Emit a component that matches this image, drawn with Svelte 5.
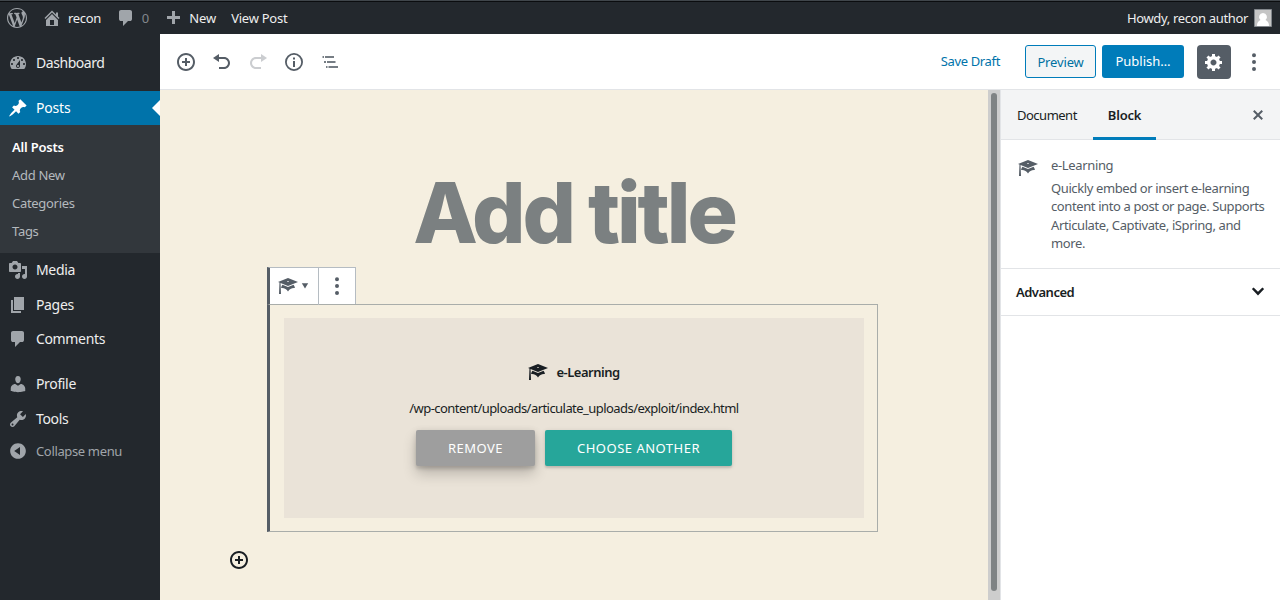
<script>
  const icons = {
    wp: 'M20 10c0-5.51-4.49-10-10-10C4.48 0 0 4.49 0 10c0 5.52 4.48 10 10 10 5.51 0 10-4.48 10-10zM7.78 15.37L4.37 6.22c.55-.02 1.17-.08 1.17-.08.5-.06.44-1.13-.06-1.11 0 0-1.45.11-2.37.11-.18 0-.37 0-.58-.01C4.12 2.69 6.87 1.11 10 1.11c2.33 0 4.45.87 6.05 2.34-.68-.11-1.65.39-1.65 1.58 0 .74.45 1.36.9 2.1.35.61.55 1.36.55 2.46 0 1.49-1.4 5-1.4 5l-3.03-8.37c.54-.02.82-.17.82-.17.5-.05.44-1.25-.06-1.22 0 0-1.44.12-2.38.12-.87 0-2.33-.12-2.33-.12-.5-.03-.56 1.2-.06 1.22l.92.08 1.26 3.41zM17.41 10c.24-.64.74-1.87.43-4.25.7 1.29 1.05 2.71 1.05 4.25 0 3.29-1.73 6.24-4.4 7.78.97-2.59 1.94-5.2 2.92-7.78zM6.1 18.09C3.12 16.65 1.11 13.53 1.11 10c0-1.3.23-2.48.72-3.59C3.25 10.3 4.67 14.2 6.1 18.09zm4.03-6.63l2.58 6.98c-.86.29-1.76.45-2.71.45-.79 0-1.57-.11-2.29-.33.81-2.38 1.62-4.74 2.42-7.1z',
    home: 'M16 8.5l1.53 1.53-1.06 1.06L10 4.6l-6.47 6.49-1.06-1.06L10 2.5l4 4v-2h2v4zm-6-2.46l6 5.99V18H4v-5.97zM12 17v-5H8v5h4z',
    comment: 'M5 2h9q.82 0 1.41.59T16 4v7q0 .82-.59 1.41T14 13h-2l-5 5v-5H5q-.82 0-1.41-.59T3 11V4q0-.82.59-1.41T5 2z',
    plus: 'M17 7v3h-5v5H9v-5H4V7h5V2h3v5h5z',
    dashboard: 'M3.76 16h12.48c1.1-1.37 1.76-3.11 1.76-5 0-4.42-3.58-8-8-8s-8 3.58-8 8c0 1.89.66 3.63 1.76 5zM10 4c.55 0 1 .45 1 1s-.45 1-1 1-1-.45-1-1 .45-1 1-1zM6 6c.55 0 1 .45 1 1s-.45 1-1 1-1-.45-1-1 .45-1 1-1zm8 0c.55 0 1 .45 1 1s-.45 1-1 1-1-.45-1-1 .45-1 1-1zm-5.37 5.55L12 7v6c0 1.1-.9 2-2 2s-2-.9-2-2c0-.57.24-1.08.63-1.45zM4 10c.55 0 1 .45 1 1s-.45 1-1 1-1-.45-1-1 .45-1 1-1zm12 0c.55 0 1 .45 1 1s-.45 1-1 1-1-.45-1-1 .45-1 1-1zm-5 3c0-.55-.45-1-1-1s-1 .45-1 1 .45 1 1 1 1-.45 1-1z',
    post: 'M10.44 3.02l1.82-1.82 6.36 6.35-1.83 1.82c-1.05-.68-2.48-.57-3.41.36l-.75.75c-.92.93-1.04 2.35-.35 3.41l-1.83 1.82-2.41-2.41-2.8 2.79c-.42.42-3.38 2.71-3.8 2.29s1.86-3.39 2.28-3.81l2.79-2.79L4.1 9.36l1.83-1.82c1.05.69 2.48.57 3.4-.36l.75-.75c.93-.92 1.05-2.35.36-3.41z',
    media: 'M13 11V4c0-.55-.45-1-1-1h-1.67L9 1H5L3.67 3H2c-.55 0-1 .45-1 1v7c0 .55.45 1 1 1h10c.55 0 1-.45 1-1zM7 4.5c1.38 0 2.5 1.12 2.5 2.5S8.38 9.5 7 9.5 4.5 8.38 4.5 7 5.62 4.5 7 4.5zM14 6h5v10.5c0 1.38-1.12 2.5-2.5 2.5S14 17.88 14 16.5s1.12-2.5 2.5-2.5c.17 0 .34.02.5.05V9h-3V6zm-4 8.05V13h2v3.5c0 1.38-1.12 2.5-2.5 2.5S7 17.88 7 16.5 8.12 14 9.5 14c.17 0 .34.02.5.05z',
    page: 'M6 15V2h10v13H6zm-1 1h8v2H3V5h2v11z',
    user: 'M10 9.25c-2.27 0-2.73-3.44-2.73-3.44C7 4.02 7.82 2 9.97 2c2.16 0 2.98 2.02 2.71 3.81 0 0-.41 3.44-2.68 3.44zm0 2.57L12.72 10c2.39 0 4.52 2.33 4.52 4.53v2.49s-3.65 1.13-7.24 1.13c-3.65 0-7.24-1.13-7.24-1.13v-2.49c0-2.25 1.94-4.48 4.47-4.48z',
    tools: 'M16.68 9.77c-1.34 1.34-3.3 1.67-4.95.99l-5.41 6.52c-.99.99-2.59.99-3.58 0s-.99-2.59 0-3.57l6.52-5.42c-.68-1.65-.35-3.61.99-4.95 1.28-1.28 3.12-1.62 4.72-1.06l-2.89 2.89 2.82 2.82 2.86-2.87c.53 1.58.18 3.39-1.08 4.65zM3.81 16.21c.4.39 1.04.39 1.43 0 .4-.4.4-1.04 0-1.43-.39-.4-1.03-.4-1.43 0-.39.39-.39 1.03 0 1.43z',
    collapse: 'M10 2.16c4.33 0 7.84 3.51 7.84 7.84s-3.51 7.84-7.84 7.84S2.16 14.33 2.16 10 5.71 2.16 10 2.16zm2 11.72V6.12L6.18 9.97z',
    insert: 'M10 1c-5 0-9 4-9 9s4 9 9 9 9-4 9-9-4-9-9-9zm0 16c-3.9 0-7-3.1-7-7s3.1-7 7-7 7 3.1 7 7-3.1 7-7 7zm1-11H9v3H6v2h3v3h2v-3h3V9h-3V6z',
    undo: 'M12 5H7V2L1 6l6 4V7h5c2.2 0 4 1.8 4 4s-1.8 4-4 4H7v2h5c3.3 0 6-2.7 6-6s-2.7-6-6-6z',
    redo: 'M8 5h5V2l6 4-6 4V7H8c-2.2 0-4 1.8-4 4s1.8 4 4 4h5v2H8c-3.3 0-6-2.7-6-6s2.7-6 6-6z',
    info: 'M10 1a9 9 0 1 0 0 18 9 9 0 0 0 0-18zm0 16.2a7.2 7.2 0 1 1 0-14.4 7.2 7.2 0 0 1 0 14.4zM9 9h2v6H9zM9 5.4h2v2H9z',
    outline: 'M5 4h9v2H5zM2.500 4H4v2H2.500zM7 9h8.500v2H7zM4 9h2v2H4zM8.500 14h9.500v2H8.500zM6 14h1.500v2H6z',
    dots: 'M10 1.200a2 2 0 1 0 0 4 2 2 0 0 0 0-4zM10 8a2 2 0 1 0 0 4 2 2 0 0 0 0-4zM10 15a2 2 0 1 0 0 4 2 2 0 0 0 0-4z',
    gear: 'M18 12h-2.18c-.17.7-.44 1.35-.81 1.93l1.54 1.54-2.1 2.1-1.54-1.54c-.58.36-1.23.63-1.91.79V19H8v-2.18c-.68-.16-1.33-.43-1.91-.79l-1.54 1.54-2.12-2.12 1.54-1.54c-.36-.58-.63-1.23-.79-1.91H1V9.03h2.17c.16-.7.44-1.35.8-1.94L2.43 5.55l2.1-2.1 1.54 1.54c.58-.37 1.24-.64 1.93-.81V2h3v2.18c.68.16 1.33.43 1.91.79l1.54-1.54 2.12 2.12-1.54 1.54c.36.59.64 1.24.8 1.94H18V12zm-8.5 1.5c1.66 0 3-1.34 3-3s-1.34-3-3-3-3 1.34-3 3 1.34 3 3 3z',
    close: 'M14.95 6.46L11.41 10l3.54 3.54-1.41 1.41L10 11.42l-3.53 3.53-1.42-1.42L8.58 10 5.05 6.47l1.42-1.42L10 8.58l3.54-3.53z',
    learn: 'M10 10L2.54 7.02 3 18H1l.48-11.41L0 6l10-4 10 4zm0-5c-.55 0-1 .22-1 .5s.45.5 1 .5 1-.22 1-.5-.45-.5-1-.5zm0 6l5.57-2.23c.71.94 1.2 2.07 1.36 3.3-.3-.04-.61-.07-.93-.07-2.55 0-4.78 1.37-6 3.41C8.78 13.37 6.55 12 4 12c-.32 0-.63.03-.93.07.16-1.23.65-2.36 1.36-3.3z',
    caret: 'M2 3h16l-8 13z',
    chevron: 'M3.200 6.800l1.900-1.900L10 9.800l4.900-4.900 1.900 1.900-6.800 7z'
  };
  const submenu = ['All Posts', 'Add New', 'Categories', 'Tags'];
  const lower = [['media', 'Media'], ['page', 'Pages'], ['comment', 'Comments']];
  const last = [['user', 'Profile'], ['tools', 'Tools']];
</script>

{#snippet icon(name, size = 20)}
  <svg width={size} height={size} viewBox="0 0 20 20" aria-hidden="true"><path fill-rule="evenodd" d={icons[name]} /></svg>
{/snippet}

<div class="screen">
  <header class="adminbar">
    <span class="wp">{@render icon('wp')}</span>
    <span class="site">{@render icon('home')}<b>recon</b></span>
    <span class="count">{@render icon('comment')}<b>0</b></span>
    <span class="new">{@render icon('plus')}<b>New</b></span>
    <b class="view">View Post</b>
    <span class="howdy"><b>Howdy, recon author</b>
      <svg class="avatar" width="18" height="18" viewBox="0 0 18 18"><path fill="#c5c5c5" stroke="#82878c" d="M.5.5h17v17H.5z" /><path fill="#fff" d="M9 4a4 4 0 0 0-2.500 7.100C4.200 12 3 14 3 17h12c0-3-1.200-5-3.500-5.900A4 4 0 0 0 9 4z" /></svg>
    </span>
  </header>
  <div class="main">
    <nav>
      <div class="item dash">{@render icon('dashboard')}<span>Dashboard</span></div>
      <div class="item current">{@render icon('post')}<span>Posts</span></div>
      <ul>{#each submenu as s, i}<li class:on={i === 0}>{s}</li>{/each}</ul>
      {#each lower as [i, t]}<div class="item">{@render icon(i)}<span>{t}</span></div>{/each}
      <div class="gap"></div>
      {#each last as [i, t]}<div class="item">{@render icon(i)}<span>{t}</span></div>{/each}
      <div class="item collapse">{@render icon('collapse')}<span>Collapse menu</span></div>
    </nav>
    <div class="editor">
      <div class="toolbar">
        <div class="tools">
          {@render icon('insert')}{@render icon('undo')}<span class="off">{@render icon('redo')}</span>{@render icon('info')}<span class="dim">{@render icon('outline')}</span>
        </div>
        <span class="save">Save Draft</span>
        <button class="preview">Preview</button>
        <button class="publish">Publish…</button>
        <button class="settings">{@render icon('gear')}</button>
        {@render icon('dots')}
      </div>
      <div class="work">
        <section class="canvas">
          <h1>Add title</h1>
          <div class="blocktools">
            <div class="type">{@render icon('learn')}{@render icon('caret', 8)}</div>
            <div class="more">{@render icon('dots')}</div>
          </div>
          <div class="block">
            <div class="placeholder">
              <div class="label">{@render icon('learn')}<span>e-Learning</span></div>
              <p class="path">/wp-content/uploads/articulate_uploads/exploit/index.html</p>
              <div class="actions"><button class="remove">REMOVE</button><button class="choose">CHOOSE ANOTHER</button></div>
            </div>
          </div>
          <div class="appender">{@render icon('insert')}</div>
        </section>
        <div class="scroll"><i></i></div>
        <aside>
          <div class="tabs"><span class="doc">Document</span><span class="blk">Block</span><span class="close">{@render icon('close')}</span></div>
          <div class="card">
            {@render icon('learn')}
            <div><div class="name">e-Learning</div><p>Quickly embed or insert e-learning<br />content into a post or page. Supports<br />Articulate, Captivate, iSpring, and<br />more.</p></div>
          </div>
          <div class="advanced"><span>Advanced</span>{@render icon('chevron', 18)}</div>
        </aside>
      </div>
    </div>
  </div>
</div>

<style>
  :global(body) { margin: 0; overflow: hidden; }
  * { box-sizing: border-box; }
  .screen { width: 1280px; height: 600px; display: flex; flex-direction: column; font: 13px/18px 'Noto Sans', sans-serif; letter-spacing: -.35px; overflow: hidden; white-space: nowrap; }
  svg { display: block; fill: currentColor; flex: none; }
  button { font: inherit; letter-spacing: inherit; margin: 0; padding: 0; border: 0; }
  .adminbar { height: 34px; flex: none; display: flex; align-items: center; padding: 1px 8px 0 7px; background: #23282d; border-top: 1px solid #40464b; box-shadow: inset 0 1px #0b0d0f; color: #a0a5aa; }
  .adminbar span { display: flex; align-items: center; }
  .adminbar b { font-weight: 400; color: #eee; }
  .site { margin-left: 15px; } .site b { margin-left: 6px; }
  .count { margin-left: 15px; } .count b { margin-left: 6px; color: #82878c; letter-spacing: 0; }
  .new { margin-left: 14px; } .new b { margin-left: 6px; letter-spacing: -.1px; }
  .new svg { position: relative; top: 1px; }
  .view { margin-left: 15px; letter-spacing: -.25px; }
  .howdy { margin-left: auto; gap: 6px; }
  .main { display: flex; height: 566px; }
  nav { width: 160px; flex: none; background: #23282d; color: #eee; font-size: 14px; padding-top: 12px; }
  .item { height: 34.400px; display: flex; align-items: center; padding-left: 8px; gap: 8px; }
  .item svg { color: #a0a5aa; }
  .dash { height: 34px; margin-bottom: 11px; letter-spacing: -.45px; }
  .current { height: 34px; background: #0073aa; color: #fff; position: relative; letter-spacing: -.2px; }
  .current svg { color: #fff; }
  .current::after { content: ''; position: absolute; right: 0; top: 9px; border: 8px solid transparent; border-right-color: #fff; border-left: 0; }
  ul { list-style: none; margin: 0; padding: 8px 12px; height: 128px; background: #32373c; color: #b4b9be; font-size: 13px; line-height: 28px; letter-spacing: -.3px; }
  .on { color: #fff; font-weight: 600; letter-spacing: -.2px; }
  .gap { height: 11px; }
  .collapse { color: #a0a5aa; font-size: 13px; height: 31px; }
  .editor { width: 1120px; background: #fff; }
  .toolbar { height: 56px; display: flex; align-items: center; padding: 0 16px; border-bottom: 1px solid #e2e4e7; color: #555d66; }
  .tools { display: flex; gap: 16px; margin-right: auto; }
  .off { opacity: .3; } .dim { opacity: .8; }
  .save { color: #0073aa; margin-right: 25px; padding-bottom: 1px; }
  .preview { width: 71px; height: 33px; border: 1px solid #007cba; border-radius: 3px; background: #f3f5f6; color: #0071a1; margin-right: 6px; letter-spacing: -.15px; }
  .publish { width: 82px; height: 33px; padding-bottom: 2px; border-radius: 3px; background: #007cba; color: #fff; margin-right: 13px; letter-spacing: 0; }
  .settings { width: 34px; height: 34px; border-radius: 4px; background: #555d66; color: #fff; display: grid; place-items: center; margin-right: 13px; }
  .work { display: flex; height: 510px; }
  .canvas { width: 828px; background: #f5efe0; padding: 79px 0 0 107px; }
  h1 { margin: 0; width: 614px; height: 98px; text-align: center; font: 800 84px/88px Inter, sans-serif; letter-spacing: -3.150px; color: #7b8081; }
  .blocktools { width: 89px; height: 38px; display: flex; border: 1px solid #b5bcc2; border-left: 3px solid #555d66; border-bottom: 0; background: #fff; color: #555d66; }
  .type { width: 49px; display: flex; align-items: center; padding: 0 0 2px 8px; gap: 3px; border-right: 1px solid #b5bcc2; }
  .more { flex: 1; display: grid; place-items: center; padding-bottom: 1px; }
  .block { width: 611px; height: 228px; margin-top: -1px; padding: 13px 13px 13px 14px; border: 1px solid #a9adaa; border-left: 3px solid #555d66; }
  .placeholder { height: 200px; background: #eae3d8; color: #191e23; display: flex; flex-direction: column; align-items: center; padding-top: 44px; }
  .label { display: flex; gap: 8px; align-items: center; font-weight: 600; height: 20px; letter-spacing: -.5px; }
  .path { margin: 17px 0 13px; letter-spacing: -.550px; }
  .actions { display: flex; gap: 10px; }
  .actions button { height: 36px; border-radius: 2px; color: #fff; letter-spacing: .5px; }
  .actions .remove { width: 119px; background: #9e9e9e; box-shadow: 0 3px 3px rgba(0,0,0,.1), 0 1px 7px rgba(0,0,0,.1), 0 8px 14px rgba(0,0,0,.2); }
  .choose { width: 187px; background: #26a69a; box-shadow: 0 2px 2px rgba(0,0,0,.12), 0 1px 5px rgba(0,0,0,.12); }
  .appender { margin: 18px 0 0 -38px; color: #191e23; }
  .scroll { width: 12px; background: #cdcdcd; padding: 3px 3px 0; }
  .scroll i { display: block; width: 6px; height: 498px; border-radius: 3px; background: #7f8384; }
  aside { width: 280px; border-left: 1px solid #e2e4e7; background: #fff; color: #555d66; }
  .tabs { height: 50px; display: flex; background: #f3f4f5; border-bottom: 1px solid #e2e4e7; color: #191e23; line-height: 51px; }
  .doc { width: 92px; padding-left: 16px; letter-spacing: -.5px; }
  .blk { width: 63px; height: 50px; text-align: center; font-weight: 600; border-bottom: 3px solid #007cba; letter-spacing: -.2px; }
  .close { margin: 15px 12px 0 auto; color: #555d66; }
  .card { height: 129px; padding: 16px; display: flex; gap: 13px; border-bottom: 1px solid #e2e4e7; }
  .card > svg { margin: 2px 0 0 1px; }
  .name { height: 23px; line-height: 18px; }
  .card p { margin: 0; line-height: 18.300px; letter-spacing: -.39px; }
  .advanced { height: 47px; display: flex; align-items: center; justify-content: space-between; padding: 0 13px 0 15px; border-bottom: 1px solid #e2e4e7; color: #191e23; font-weight: 600; letter-spacing: -.5px; }
</style>
